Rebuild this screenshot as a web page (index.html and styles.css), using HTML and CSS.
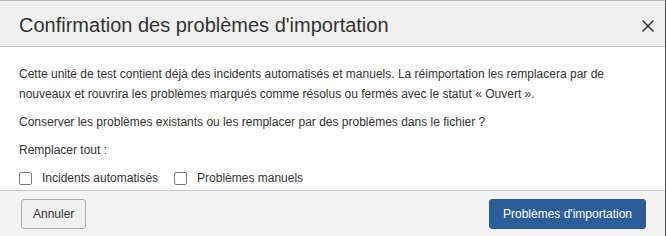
FILE: index.html
```html
<!DOCTYPE html>
<html lang="fr">
<head>
<meta charset="utf-8">
<link rel="stylesheet" href="styles.css">
</head>
<body>
<div class="dialog">
  <div class="header">
    <h1 class="title">Confirmation des problèmes d'importation</h1>
    <button class="close" aria-label="Fermer">
      <svg width="14" height="14" viewBox="0 0 14 14"><path d="M1.5 1.5 L12.5 12.5 M12.5 1.5 L1.5 12.5" stroke="#333" stroke-width="1.5" fill="none"/></svg>
    </button>
  </div>
  <div class="body">
    <p>Cette unité de test contient déjà des incidents automatisés et manuels. La réimportation les remplacera par de nouveaux et rouvrira les problèmes marqués comme résolus ou fermés avec le statut « Ouvert ».</p>
    <p>Conserver les problèmes existants ou les remplacer par des problèmes dans le fichier ?</p>
    <p>Remplacer tout :</p>
    <div class="checks">
      <label class="check"><span class="box"></span>Incidents automatisés</label>
      <label class="check"><span class="box"></span>Problèmes manuels</label>
    </div>
  </div>
  <div class="footer">
    <button class="btn">Annuler</button>
    <button class="btn primary">Problèmes d'importation</button>
  </div>
</div>
</body>
</html>
```
FILE: styles.css
```css
html, body {
  margin: 0;
  padding: 0;
  background: #ffffff;
}
body {
  font-family: "Liberation Sans", Arial, sans-serif;
  color: #333;
}
.dialog {
  width: 666px;
  height: 236px;
  border-right: 1px solid #555;
  border-top: 1px solid #bbb;
  box-sizing: border-box;
  display: flex;
  flex-direction: column;
  overflow: hidden;
}
.header {
  height: 46px;
  box-sizing: border-box;
  background: #f0f0f0;
  border-bottom: 1px solid #c8c8c8;
  display: flex;
  align-items: center;
  justify-content: space-between;
  padding: 0 10px 0 19px;
}
.title {
  margin: 0;
  font-size: 20px;
  font-weight: normal;
  color: #333;
  line-height: 24px;
  padding-top: 2px;
}
.close {
  border: 0;
  background: none;
  padding: 0;
  width: 14px;
  height: 14px;
  display: flex;
  margin-top: 4px;
}
.body {
  padding: 17px 19px 0 19px;
  font-size: 12px;
  line-height: 20px;
  flex: 1;
  background: #fff;
}
.body p {
  margin: 0 0 8px 0;
}
.checks {
  display: flex;
  gap: 16px;
  align-items: center;
}
.check {
  display: flex;
  align-items: center;
}
.box {
  width: 11px;
  height: 11px;
  border: 1px solid #7a7a7a;
  border-radius: 2px;
  margin-right: 10px;
  background: #fff;
}
.footer {
  height: 46px;
  box-sizing: border-box;
  background: #f4f4f4;
  border-top: 1px solid #c8c8c8;
  display: flex;
  justify-content: space-between;
  align-items: flex-start;
  padding: 8px 19px 0 21px;
}
.btn {
  font-family: "Liberation Sans", Arial, sans-serif;
  font-size: 12px;
  height: 30px;
  padding: 0 11px;
  border: 1px solid #adadad;
  border-radius: 3px;
  background: #f0f0f0;
  color: #333;
  white-space: nowrap;
}
.primary {
  background: #2c5e99;
  border-color: #2c5e99;
  color: #fff;
  padding: 0 13px;
}
```
